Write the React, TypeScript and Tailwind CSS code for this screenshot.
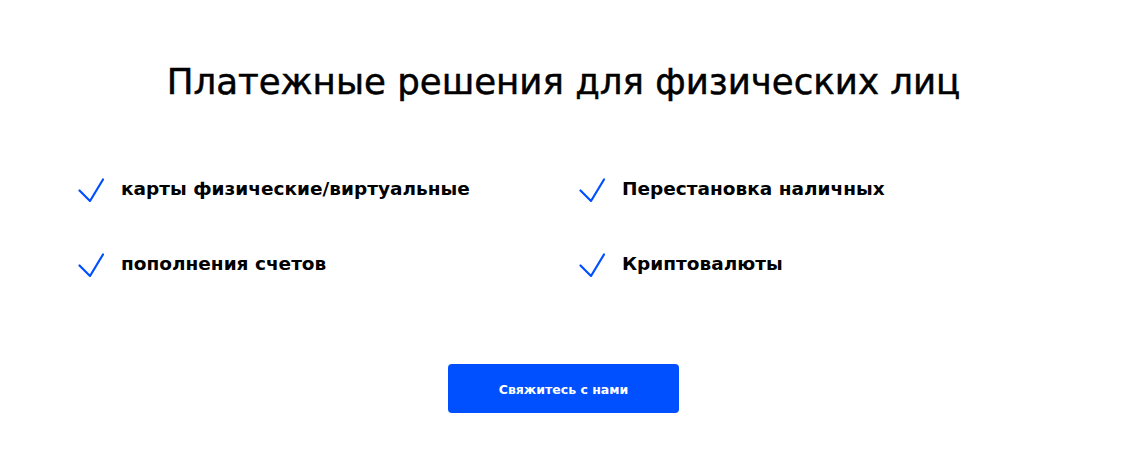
import React from 'react';

const items = [
  'карты физические/виртуальные',
  'Перестановка наличных',
  'пополнения счетов',
  'Криптовалюты',
];

const Check = () => (
  <svg width="26" height="24" viewBox="0 0 26 24" fill="none" className="shrink-0">
    <path d="M1.5 12.5 L12 23 L25 1.5" stroke="#0050ff" strokeWidth="2.2" strokeLinecap="round" strokeLinejoin="round" />
  </svg>
);

const App: React.FC = () => {
  return (
    <div
      className="w-full h-[449px] bg-white text-black pr-[17px]"
      style={{ fontFamily: '"DejaVu Sans", "Noto Sans", sans-serif' }}
    >
      <h1 className="pt-[60px] text-center text-[35.6px] leading-[44px] font-normal [-webkit-text-stroke:0.5px_#000]">
        Платежные решения для физических лиц
      </h1>

      <div className="mt-[73px] ml-[78px] grid grid-cols-[501px_1fr] gap-y-[50px]">
        {items.map(t => (
          <div key={t} className="flex items-center h-[25px]">
            <Check />
            <span className="ml-[17px] text-[18.5px] font-bold leading-none">{t}</span>
          </div>
        ))}
      </div>

      <div className="mt-[87px] flex justify-center">
        <button className="w-[231px] h-[49px] pt-[3px] rounded-[4px] bg-[#0050ff] text-white text-[12.5px] font-bold">
          Свяжитесь с нами
        </button>
      </div>
    </div>
  );
};

export default App;
